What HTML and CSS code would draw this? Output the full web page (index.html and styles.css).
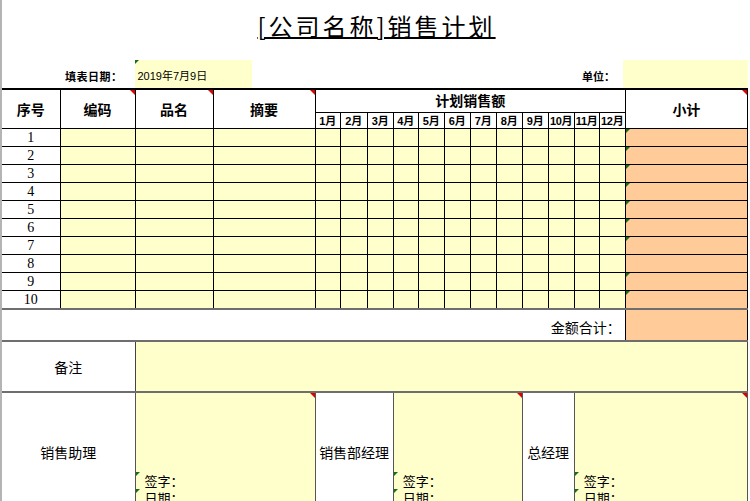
FILE: index.html
```html
<!DOCTYPE html>
<html lang="zh-CN">
<head>
<meta charset="utf-8">
<title>销售计划</title>
<link rel="stylesheet" href="styles.css">
</head>
<body>
<div class="sheet">
  <div class="title-row"><h1 class="title">[公司名称]销售计划</h1></div>
  <div class="info-row">
    <span class="info-label">填表日期：</span>
    <span class="date-cell mk-green">2019年7月9日</span>
    <span class="spacer"></span>
    <span class="info-label">单位：</span>
    <span class="unit-cell"></span>
  </div>
  <table class="grid">
    <colgroup>
      <col class="c-no"><col class="c-code"><col class="c-name"><col class="c-memo">
      <col class="w25"><col class="w27"><col class="w26"><col class="w25"><col class="w26"><col class="w26">
      <col class="w26"><col class="w26"><col class="w26"><col class="w26"><col class="w25"><col class="w26">
      <col class="c-sub">
    </colgroup>
    <thead>
      <tr class="h1">
        <th rowspan="2" class="first">序号</th>
        <th rowspan="2" class="mk-red">编码</th>
        <th rowspan="2" class="mk-red">品名</th>
        <th rowspan="2" class="mk-red">摘要</th>
        <th colspan="12" class="plan">计划销售额</th>
        <th rowspan="2" class="mk-red">小计</th>
      </tr>
      <tr class="h2">
        <th class="m">1月</th><th class="m">2月</th><th class="m">3月</th><th class="m">4月</th>
        <th class="m">5月</th><th class="m">6月</th><th class="m">7月</th><th class="m">8月</th>
        <th class="m">9月</th><th class="m">10月</th><th class="m">11月</th><th class="m">12月</th>
      </tr>
    </thead>
    <tbody>
      <tr class="row"><td class="first no">1</td><td class="y"></td><td class="y"></td><td class="y"></td><td class="y"></td><td class="y"></td><td class="y"></td><td class="y"></td><td class="y"></td><td class="y"></td><td class="y"></td><td class="y"></td><td class="y"></td><td class="y"></td><td class="y"></td><td class="y"></td><td class="o mk-green"></td></tr>
      <tr class="row"><td class="first no">2</td><td class="y"></td><td class="y"></td><td class="y"></td><td class="y"></td><td class="y"></td><td class="y"></td><td class="y"></td><td class="y"></td><td class="y"></td><td class="y"></td><td class="y"></td><td class="y"></td><td class="y"></td><td class="y"></td><td class="y"></td><td class="o mk-green"></td></tr>
      <tr class="row"><td class="first no">3</td><td class="y"></td><td class="y"></td><td class="y"></td><td class="y"></td><td class="y"></td><td class="y"></td><td class="y"></td><td class="y"></td><td class="y"></td><td class="y"></td><td class="y"></td><td class="y"></td><td class="y"></td><td class="y"></td><td class="y"></td><td class="o mk-green"></td></tr>
      <tr class="row"><td class="first no">4</td><td class="y"></td><td class="y"></td><td class="y"></td><td class="y"></td><td class="y"></td><td class="y"></td><td class="y"></td><td class="y"></td><td class="y"></td><td class="y"></td><td class="y"></td><td class="y"></td><td class="y"></td><td class="y"></td><td class="y"></td><td class="o mk-green"></td></tr>
      <tr class="row"><td class="first no">5</td><td class="y"></td><td class="y"></td><td class="y"></td><td class="y"></td><td class="y"></td><td class="y"></td><td class="y"></td><td class="y"></td><td class="y"></td><td class="y"></td><td class="y"></td><td class="y"></td><td class="y"></td><td class="y"></td><td class="y"></td><td class="o mk-green"></td></tr>
      <tr class="row"><td class="first no">6</td><td class="y"></td><td class="y"></td><td class="y"></td><td class="y"></td><td class="y"></td><td class="y"></td><td class="y"></td><td class="y"></td><td class="y"></td><td class="y"></td><td class="y"></td><td class="y"></td><td class="y"></td><td class="y"></td><td class="y"></td><td class="o mk-green"></td></tr>
      <tr class="row"><td class="first no">7</td><td class="y"></td><td class="y"></td><td class="y"></td><td class="y"></td><td class="y"></td><td class="y"></td><td class="y"></td><td class="y"></td><td class="y"></td><td class="y"></td><td class="y"></td><td class="y"></td><td class="y"></td><td class="y"></td><td class="y"></td><td class="o mk-green"></td></tr>
      <tr class="row"><td class="first no">8</td><td class="y"></td><td class="y"></td><td class="y"></td><td class="y"></td><td class="y"></td><td class="y"></td><td class="y"></td><td class="y"></td><td class="y"></td><td class="y"></td><td class="y"></td><td class="y"></td><td class="y"></td><td class="y"></td><td class="y"></td><td class="o"></td></tr>
      <tr class="row"><td class="first no">9</td><td class="y"></td><td class="y"></td><td class="y"></td><td class="y"></td><td class="y"></td><td class="y"></td><td class="y"></td><td class="y"></td><td class="y"></td><td class="y"></td><td class="y"></td><td class="y"></td><td class="y"></td><td class="y"></td><td class="y"></td><td class="o mk-green"></td></tr>
      <tr class="row"><td class="first no">10</td><td class="y"></td><td class="y"></td><td class="y"></td><td class="y"></td><td class="y"></td><td class="y"></td><td class="y"></td><td class="y"></td><td class="y"></td><td class="y"></td><td class="y"></td><td class="y"></td><td class="y"></td><td class="y"></td><td class="y"></td><td class="o mk-green"></td></tr>
      <tr class="total"><td colspan="16" class="first total-label">金额合计：</td><td class="o"></td></tr>
      <tr class="remark"><td colspan="2" class="first lbl">备注</td><td colspan="15" class="y"></td></tr>
      <tr class="sign">
        <td colspan="2" class="first lbl">销售助理</td>
        <td colspan="2" class="y sign-cell mk-red"><div class="sl">签字：</div><div class="sl">日期：</div></td>
        <td colspan="3" class="lbl">销售部经理</td>
        <td colspan="5" class="y sign-cell mk-red"><div class="sl">签字：</div><div class="sl">日期：</div></td>
        <td colspan="2" class="lbl">总经理</td>
        <td colspan="3" class="y sign-cell mk-red"><div class="sl">签字：</div><div class="sl">日期：</div></td>
      </tr>
    </tbody>
  </table>
</div>
</body>
</html>
```
FILE: styles.css
```css
html, body {
  margin: 0;
  padding: 0;
  background: #ffffff;
}
body {
  font-family: "Noto Sans CJK SC", "Liberation Sans", sans-serif;
  color: #000;
  overflow: hidden;
}
.sheet {
  width: 748px;
  height: 501px;
  box-sizing: border-box;
  border-left: 2px solid #b4b4b4;
  overflow: hidden;
}
.title-row {
  height: 60px;
  display: flex;
  justify-content: center;
}
.title {
  margin: 0;
  padding-top: 8px;
  padding-left: 3px;
  font-size: 24px;
  font-weight: 400;
  letter-spacing: 3px;
  line-height: normal;
  text-decoration: underline;
  text-decoration-thickness: 1.5px;
  text-underline-offset: 1px;
}
.info-row {
  height: 28px;
  display: flex;
  font-size: 11px;
  line-height: 16px;
}
.info-label {
  font-weight: 700;
  align-self: flex-end;
  padding-bottom: 4px;
}
.info-row .info-label:first-child {
  margin-left: 63px;
  letter-spacing: 0.5px;
}
.date-cell {
  position: relative;
  margin-left: 12px;
  width: 117px;
  box-sizing: border-box;
  padding: 0 0 4px 3px;
  background: #ffffcc;
  display: flex;
  align-items: flex-end;
  font-family: "Liberation Sans", "Noto Sans CJK SC", sans-serif;
}
.spacer { flex: 1; }
.unit-cell {
  margin-left: 8px;
  width: 125px;
  background: #ffffcc;
}

/* grid */
.grid {
  border-collapse: collapse;
  table-layout: fixed;
  width: 746px;
}
.c-no { width: 58px; }
.c-code { width: 75px; }
.c-name { width: 78px; }
.c-memo { width: 102px; }
.w25 { width: 25px; }
.w26 { width: 26px; }
.w27 { width: 27px; }
.c-sub { width: 122px; }

.grid th, .grid td {
  padding: 0;
  border: 1px solid #000;
  position: relative;
  text-align: center;
}
.grid th {
  font-weight: 700;
  font-size: 14px;
  line-height: 16px;
}
.grid .first { border-left: none; }
.grid thead tr.h1 th {
  border-top: 2px solid #000;
  height: 20px;
}
.grid th.plan {
  padding-top: 2px;
  vertical-align: top;
}
.grid tr.h2 th {
  height: 14px;
}
.grid th.m {
  font-size: 11px;
  line-height: 14px;
  font-family: "Liberation Sans", "Noto Sans CJK SC", sans-serif;
  letter-spacing: -0.3px;
  padding-top: 1px;
}
.grid tr.row td {
  height: 17px;
}
.grid td.no {
  font-family: "Liberation Serif", serif;
  font-size: 14px;
  line-height: 16px;
}
.y { background: #ffffcc; }
.o { background: #ffcc99; }

.grid tr.total td {
  height: 27px;
  border-top: 2px solid #6e6e6e;
  border-bottom: 2px solid #6e6e6e;
}
.grid td.total-label {
  text-align: right;
  padding-right: 4px;
  font-size: 14px;
  line-height: 18px;
  padding-top: 3px;
}
.grid tr.remark td {
  height: 49px;
  border-bottom: 2px solid #6e6e6e;
  border-left-color: #444;
  border-right-color: #444;
}
.grid td.lbl {
  font-size: 14px;
  line-height: 18px;
}
.grid tr.sign td {
  height: 117px;
  border-left-color: #555;
  border-right-color: #555;
  vertical-align: middle;
}
.grid tr.sign td.sign-cell {
  height: 38px;
  vertical-align: top;
  text-align: left;
  padding-top: 79px;
}
.sl {
  position: relative;
  padding-left: 9px;
  font-size: 13px;
  line-height: 17px;
}

/* comment markers */
.mk-red::after {
  content: "";
  position: absolute;
  top: 0;
  right: 0;
  width: 0;
  height: 0;
  border-top: 5px solid #e00000;
  border-left: 5px solid transparent;
}
.mk-green::before,
.sl::before {
  content: "";
  position: absolute;
  top: 0;
  left: 0;
  width: 0;
  height: 0;
  border-top: 4px solid #157015;
  border-right: 4px solid transparent;
}
```
